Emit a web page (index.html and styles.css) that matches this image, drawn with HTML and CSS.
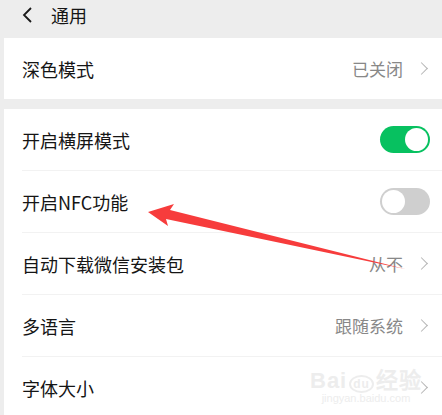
FILE: index.html
```html
<!DOCTYPE html>
<html lang="zh-CN">
<head>
    <meta charset="UTF-8">
    <meta name="viewport" content="width=device-width, initial-scale=1.0">
    <title>通用</title>
    <link rel="stylesheet" href="styles.css">
</head>
<body>
    <div class="page">
        <div class="header">
            <svg class="back" width="12" height="16" viewBox="0 0 12 16"><path d="M9 1 L2 8 L9 15" fill="none" stroke="#1a1a1a" stroke-width="1.8"/></svg>
            <span class="title">通用</span>
        </div>

        <div class="group">
            <div class="row">
                <span class="label">深色模式</span>
                <span class="value">已关闭</span>
                <span class="chev"></span>
            </div>
        </div>

        <div class="group">
            <div class="row">
                <span class="label">开启横屏模式</span>
                <span class="switch on"><span class="knob"></span></span>
            </div>
            <div class="row">
                <span class="label">开启NFC功能</span>
                <span class="switch"><span class="knob"></span></span>
            </div>
            <div class="row">
                <span class="label">自动下载微信安装包</span>
                <span class="value">从不</span>
                <span class="chev"></span>
            </div>
            <div class="row">
                <span class="label">多语言</span>
                <span class="value">跟随系统</span>
                <span class="chev"></span>
            </div>
            <div class="row">
                <span class="label">字体大小</span>
                <span class="chev"></span>
            </div>
        </div>
    </div>

    <!-- annotation arrow over the screenshot -->
    <svg class="arrow" width="442" height="415" viewBox="0 0 442 415">
        <polygon points="148,212 174,204 170,210 405,269 166,219 168,226" fill="#f73c3c"/>
    </svg>

    <div class="watermark">
        <div class="wm-top">Bai<span class="paw">du</span>经验</div>
        <div class="wm-url">jingyan.baidu.com</div>
    </div>
</body>
</html>
```

FILE: styles.css
```css
body {
    margin: 0;
    background: #ededed;
    font-family: "Noto Sans CJK SC", "Noto Sans", sans-serif;
    color: #151515;
    width: 442px;
    height: 415px;
    overflow: hidden;
    position: relative;
}
.page {
    margin-left: 4px;
}
.header {
    height: 38px;
    box-sizing: border-box;
    padding: 0 0 9px 18px;
    display: flex;
    align-items: center;
    background: #ededed;
}
.header .title {
    font-size: 18px;
    margin-left: 17px;
    line-height: 1;
}
.group {
    background: #fff;
    margin-bottom: 10px;
}
.row {
    height: 61px;
    display: flex;
    align-items: center;
    margin-left: 18px;
    padding-right: 14px;
    border-bottom: 1px solid #f2f2f2;
}
.row:last-child {
    border-bottom: none;
}
.group:first-of-type .row {
    height: 62px;
}
.label {
    font-size: 18px;
    flex: 1;
}
.value {
    font-size: 17px;
    color: #888;
    margin-right: 14px;
}
.chev {
    width: 8px;
    height: 8px;
    border-top: 1.6px solid #b5b5b5;
    border-right: 1.6px solid #b5b5b5;
    transform: rotate(45deg);
    margin-right: 2px;
}
.switch {
    width: 50px;
    height: 27px;
    border-radius: 14px;
    background: #cfcfcf;
    display: flex;
    align-items: center;
    padding: 0 2px;
    box-sizing: border-box;
    margin-right: -2px;
}
.switch .knob {
    width: 23px;
    height: 23px;
    border-radius: 50%;
    background: #fff;
}
.switch.on {
    background: #07c160;
    justify-content: flex-end;
}
.arrow {
    position: absolute;
    left: 0;
    top: 0;
}
.watermark {
    position: absolute;
    left: 310px;
    top: 362px;
    color: #ededed;
    font-family: "Liberation Sans", sans-serif;
    text-align: center;
}
.wm-top {
    font-size: 22px;
    font-weight: bold;
    letter-spacing: 1px;
}
.paw {
    font-size: 12px;
    border-radius: 50%;
    border: 2px solid #ededed;
    padding: 0 2px;
    margin: 0 2px;
}
.wm-url {
    font-size: 11px;
    margin-top: -2px;
}
```
